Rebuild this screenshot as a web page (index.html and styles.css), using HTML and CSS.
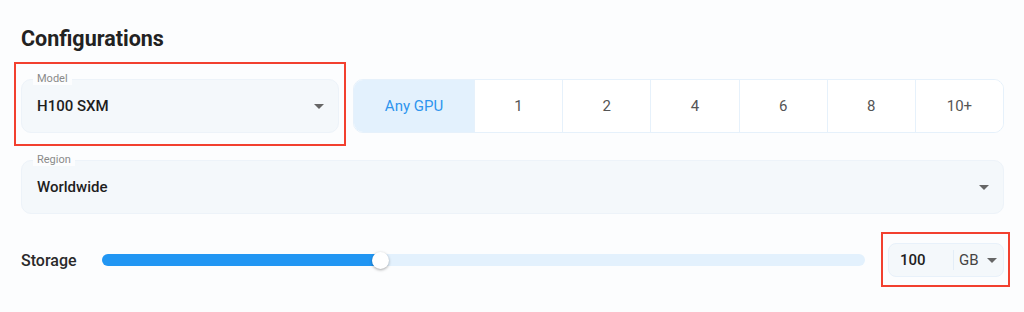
FILE: index.html
```html
<!DOCTYPE html>
<html lang="en">
<head>
    <meta charset="UTF-8">
    <meta name="viewport" content="width=device-width, initial-scale=1.0">
    <title>Configurations</title>
    <link rel="stylesheet" href="styles.css">
</head>
<body>
    <h1>Configurations</h1>

    <div class="row">
        <div class="field model-field highlight">
            <span class="field-label">Model</span>
            <span class="field-value">H100 SXM</span>
            <span class="caret"></span>
        </div>
        <div class="gpu-group">
            <button class="gpu-option active">Any GPU</button>
            <button class="gpu-option">1</button>
            <button class="gpu-option">2</button>
            <button class="gpu-option">4</button>
            <button class="gpu-option">6</button>
            <button class="gpu-option">8</button>
            <button class="gpu-option">10+</button>
        </div>
    </div>

    <div class="row">
        <div class="field region-field">
            <span class="field-label">Region</span>
            <span class="field-value">Worldwide</span>
            <span class="caret"></span>
        </div>
    </div>

    <div class="storage-row">
        <span class="storage-label">Storage</span>
        <div class="slider">
            <div class="slider-fill" style="width: 278px"></div>
            <div class="slider-thumb" style="left: 278px"></div>
        </div>
        <div class="size-input highlight-small">
            <span class="size-value">100</span>
            <span class="size-unit">GB</span>
            <span class="caret"></span>
        </div>
    </div>
</body>
</html>
```

FILE: styles.css
```css
html {
    background-color: #fcfdfe;
}
body {
    font-family: Roboto, "Liberation Sans", sans-serif;
    margin: 0;
    padding: 27px 20px 35px 21px;
    background-color: #fcfdfe;
    color: #222;
}
h1 {
    font-size: 21.5px;
    font-weight: 700;
    line-height: 24px;
    margin: 0 0 28px;
    color: #222;
}
.row {
    display: flex;
    gap: 14px;
    margin-bottom: 27px;
}
.field {
    position: relative;
    display: flex;
    align-items: center;
    height: 54px;
    box-sizing: border-box;
    padding: 0 14px 0 15px;
    background-color: #f4f8fb;
    border: 1px solid #edf3f9;
    border-radius: 10px;
}
.model-field {
    width: 318px;
    flex: none;
}
.region-field {
    flex: 1;
}
.field-label {
    position: absolute;
    top: -8px;
    left: 11px;
    padding: 0 4px;
    font-size: 11px;
    line-height: 13px;
    color: #8a8a8a;
    background-color: #fcfdfe;
}
.field-value {
    flex: 1;
    font-size: 15px;
    font-weight: 500;
    color: #1e1e1e;
}
.caret {
    width: 0;
    height: 0;
    border-left: 5px solid transparent;
    border-right: 5px solid transparent;
    border-top: 5px solid #666;
}
.highlight::after {
    content: "";
    position: absolute;
    top: -18px;
    left: -8px;
    right: -8px;
    bottom: -14px;
    border: 2px solid #f2402f;
    pointer-events: none;
}
.gpu-group {
    flex: 1;
    display: flex;
    height: 54px;
    box-sizing: border-box;
    border: 1px solid #e6f1fb;
    border-radius: 10px;
    overflow: hidden;
    background-color: #fff;
}
.gpu-option {
    flex: 1;
    border: none;
    border-left: 1px solid #e6f1fb;
    background-color: #fff;
    font-family: inherit;
    font-size: 15px;
    color: #555;
    padding: 0;
    cursor: pointer;
}
.gpu-option.active {
    flex: 0 0 120px;
    border-left: none;
    background-color: #e3f1fd;
    color: #2e95ee;
}
.storage-row {
    display: flex;
    align-items: center;
    height: 34px;
    margin-top: 29px;
}
.storage-label {
    flex: none;
    width: 81px;
    font-size: 16px;
    font-weight: 500;
    color: #2a2a2a;
}
.slider {
    position: relative;
    flex: 1;
    height: 12px;
    border-radius: 6px;
    background-color: #e3f1fd;
}
.slider-fill {
    height: 100%;
    border-radius: 6px;
    background-color: #2196f3;
}
.slider-thumb {
    position: absolute;
    top: 50%;
    width: 17px;
    height: 17px;
    margin: -8px 0 0 -8px;
    border-radius: 50%;
    background-color: #fff;
    box-shadow: 0 1px 3px rgba(0, 0, 0, 0.35);
}
.size-input {
    position: relative;
    display: flex;
    align-items: center;
    width: 116px;
    height: 34px;
    box-sizing: border-box;
    margin-left: 23px;
    padding: 0 6px 0 11px;
    background-color: #f4f8fb;
    border: 1px solid #e8f1fa;
    border-radius: 8px;
}
.size-value {
    width: 53px;
    font-size: 15px;
    font-weight: 500;
    color: #1e1e1e;
}
.size-unit {
    flex: 1;
    border-left: 1px solid #e3edf7;
    padding-left: 5px;
    font-size: 15px;
    color: #444;
    line-height: 20px;
}
.highlight-small::after {
    content: "";
    position: absolute;
    top: -12px;
    left: -8px;
    right: -7px;
    bottom: -11px;
    border: 2px solid #f2402f;
    pointer-events: none;
}
```
